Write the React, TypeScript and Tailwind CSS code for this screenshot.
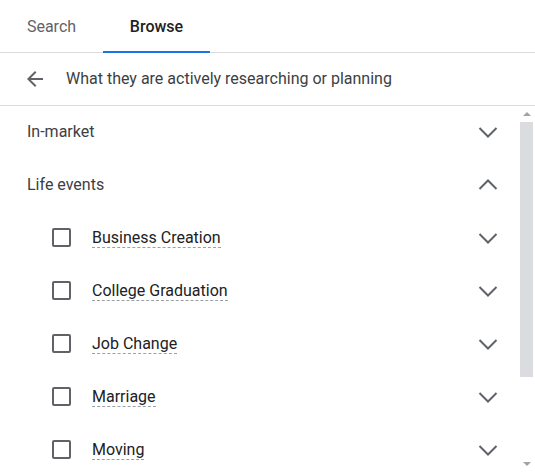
const ChevronDown = () => (
  <svg width="20" height="12" viewBox="0 0 20 12" fill="none" stroke="#5f6368" strokeWidth="2">
    <path d="M1.5 2L10 10.5L18.5 2" />
  </svg>
);

const ChevronUp = () => (
  <svg width="20" height="12" viewBox="0 0 20 12" fill="none" stroke="#5f6368" strokeWidth="2">
    <path d="M1.5 10L10 1.5L18.5 10" />
  </svg>
);

const items = ["Business Creation", "College Graduation", "Job Change", "Marriage", "Moving"];

export default function App() {
  return (
    <div className="w-[535px] h-[472px] overflow-hidden bg-white font-['Roboto',sans-serif] flex flex-col">
      <div className="flex h-[53px] border-b border-[#dadce0] shrink-0">
        <div className="w-[103px] flex items-center justify-center text-[16px] text-[#5f6368] pt-px">
          Search
        </div>
        <div className="relative w-[107px] flex items-center justify-center text-[16px] text-[#202124] font-medium pt-px">
          Browse
          <div className="absolute left-0 right-0 bottom-[-1px] h-[2px] bg-[#1a73e8]" />
        </div>
      </div>

      <div className="flex items-center h-[53px] border-b border-[#dadce0] shrink-0 pl-[23px]">
        <svg width="24" height="24" viewBox="0 0 24 24" fill="#5f6368">
          <path d="M20 11H7.83l5.59-5.59L12 4l-8 8 8 8 1.41-1.41L7.83 13H20v-2z" />
        </svg>
        <span className="ml-[19px] text-[16px] text-[#3c4043]">
          What they are actively researching or planning
        </span>
      </div>

      <div className="flex flex-1 min-h-0">
        <div className="flex-1 overflow-hidden">
          <div className="-mt-px">
            <div className="flex items-center justify-between h-[53px] pl-[27px] pr-[22px]">
              <span className="text-[16px] text-[#3c4043]">In-market</span>
              <ChevronDown />
            </div>
            <div className="flex items-center justify-between h-[53px] pl-[27px] pr-[22px]">
              <span className="text-[16px] text-[#3c4043]">Life events</span>
              <ChevronUp />
            </div>
            {items.map((item) => (
              <div key={item} className="flex items-center h-[53px] pl-[52px] pr-[22px]">
                <div className="w-[19px] h-[19px] border-2 border-[#5f6368] rounded-[2px] shrink-0" />
                <span className="ml-[21px] text-[16px] text-[#202124] leading-[19px] border-b border-dashed border-[#9aa0a6]">
                  {item}
                </span>
                <div className="ml-auto flex">
                  <ChevronDown />
                </div>
              </div>
            ))}
          </div>
        </div>

        <div className="w-[15px] flex flex-col items-center pr-[2px]">
          <div className="h-[16px] flex items-center justify-center">
            <div className="w-0 h-0 border-l-[4px] border-r-[4px] border-b-[4px] border-l-transparent border-r-transparent border-b-[#a3a3a3]" />
          </div>
          <div className="w-[13px] h-[255px] bg-[#dadce0]" />
          <div className="flex-1" />
          <div className="h-[16px] flex items-center justify-center">
            <div className="w-0 h-0 border-l-[4px] border-r-[4px] border-t-[4px] border-l-transparent border-r-transparent border-t-[#a3a3a3]" />
          </div>
        </div>
      </div>
    </div>
  );
}
